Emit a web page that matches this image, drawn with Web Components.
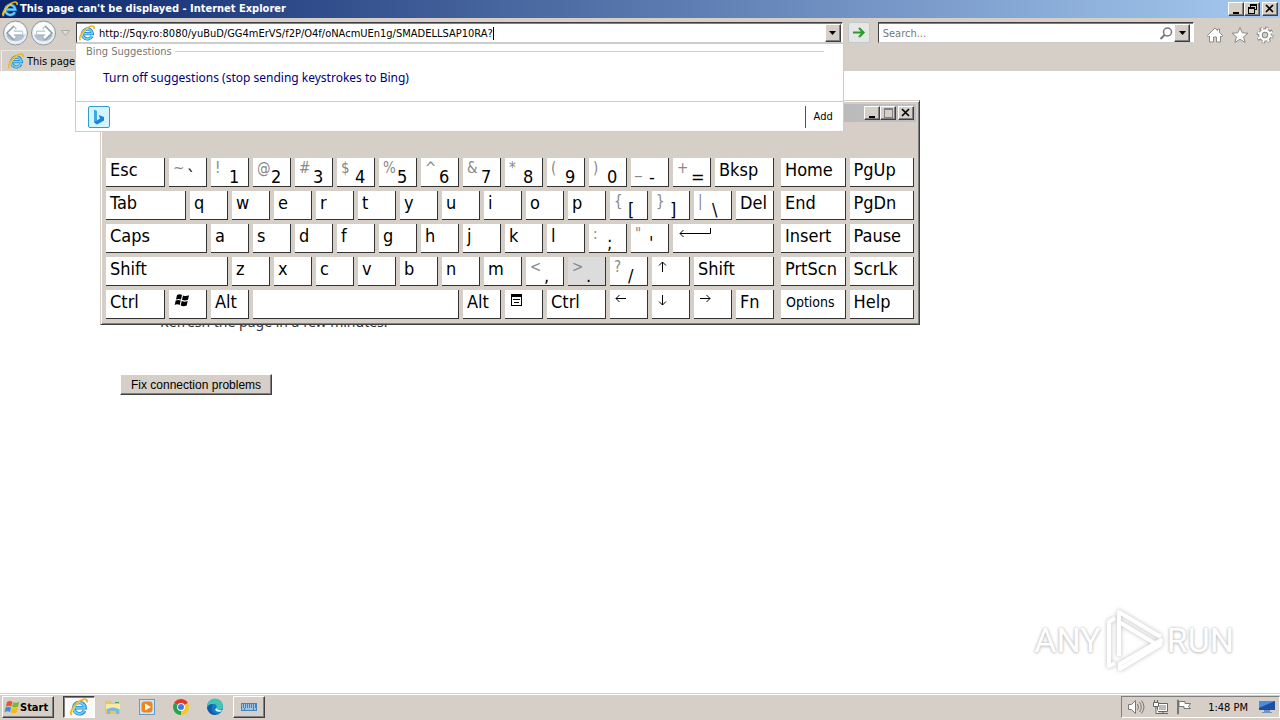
<!DOCTYPE html>
<html lang="en">
<head>
<meta charset="utf-8">
<title>This page can't be displayed - Internet Explorer</title>
<style>
  :root {
    --face: #d5cfc8;
    --ui: "DejaVu Sans Condensed", "DejaVu Sans", sans-serif;
  }
  body { margin: 0; background: #fff; font-family: var(--ui); font-size: 11px; color: #000; }
</style>
</head>
<body>
<desk-top></desk-top>

<script>
const define = (name, html, setup) => {
  const template = document.createElement('template');
  template.innerHTML = html;
  customElements.define(name, class extends HTMLElement {
    constructor() {
      super();
      this.attachShadow({ mode: 'open' }).append(template.content.cloneNode(true));
    }
    connectedCallback() { if (setup) setup(this, this.shadowRoot); }
  });
};

/* Blue "e" with the golden orbit; size comes from --size. */
define('ie-logo', `
<style>
  :host { display: block; width: var(--size, 16px); height: var(--size, 16px); flex: none; }
  svg { display: block; width: 100%; height: 100%; }
</style>
<svg viewBox="0 0 16 16" aria-hidden="true" fill="none">
  <path d="M12.9 11.2A5 5 0 1 1 13.4 8.700H4.600" stroke="#1c86d0" stroke-width="3.200"/>
  <path d="M12.700 11.2A5 5 0 1 1 13.2 8.700H4.600" stroke="#74cdf5" stroke-width="1.800"/>
  <path d="M1.600 15C-1.2 12.600 4.600 5.200 9 2.500C12.500.400 15.600.200 15 3.800" stroke="#eeb41c" stroke-width="1.700"/>
  <path d="M2 14.200C1 11.600 5.500 5.800 9 3.200" stroke="#ffe36b" stroke-width=".8"/>
</svg>`);

/* Minimise / restore / maximise / close button of a window's title bar. */
const captionGlyphs = {
  minimize: '<path d="M3 9h6v2H3z"/>',
  restore: '<path fill-rule="evenodd" d="M4 1h7v6H9v4H2V4h2zM5 3v1h4v2h1V3zM3 6v4h5V6z"/>',
  maximize: '<path fill="#808080" fill-rule="evenodd" d="M2 1h9v10H2zM3 3v7h7V3z"/>',
  close: '<path d="M2 2l7 7M9 2L2 9" fill="none" stroke="#000" stroke-width="1.700"/>'
};
define('caption-button', `
<style>
  :host { display: block; }
  :host([kind="close"]) { margin-left: 2px; }
  button { box-sizing: border-box; display: block; width: 16px; height: 14px; padding: 0 1px; background: var(--face);
    border: 1px solid; border-color: #fff #404040 #404040 #fff; box-shadow: inset -1px -1px #808080; }
  svg { display: block; width: 12px; height: 12px; }
</style>
<button type="button"><svg viewBox="0 0 12 12"></svg></button>`,
(host, root) => {
  const kind = host.getAttribute('kind');
  root.querySelector('button').setAttribute('aria-label', kind);
  root.querySelector('svg').innerHTML = captionGlyphs[kind];
});

define('title-bar', `
<style>
  :host { display: flex; align-items: center; height: 18px; padding: 0 2px; gap: 2px; color: #fff;
    background: linear-gradient(90deg, #0a246a, #a6caf0); }
  h1 { flex: 1; margin: 0; font-size: 11px; line-height: 18px; font-weight: 700; white-space: nowrap; }
  .buttons { display: flex; }
</style>
<ie-logo></ie-logo>
<h1><slot></slot></h1>
<div class="buttons">
  <caption-button kind="minimize"></caption-button>
  <caption-button kind="restore"></caption-button>
  <caption-button kind="close"></caption-button>
</div>`);

define('drop-arrow', `
<style>
  :host { display: block; flex: none; }
  button { box-sizing: border-box; display: grid; place-items: center; width: 16px; height: 18px; padding: 0;
    background: var(--face); border: 1px solid; border-color: #fff #404040 #404040 #fff; box-shadow: inset -1px -1px #808080; }
</style>
<button type="button" aria-label="Open list"><svg width="7" height="4" viewBox="0 0 7 4"><path d="M0 0h7L3.500 4z"/></svg></button>`);

define('suggest-popup', `
<style>
  :host { display: block; background: #fff; border: 1px solid #ccc; box-sizing: border-box; }
  .head { display: flex; align-items: center; gap: 3px; height: 14px; padding: 0 19px 0 10px; color: #777; }
  .head::after { content: ""; flex: 1; border-top: 1px solid #ccc; }
  .row { display: flex; align-items: center; height: 40px; padding: 0 0 3px 27px; border-bottom: 1px solid #ccc; }
  a { color: #000080; font-family: "Noto Sans", sans-serif; font-size: 12px; line-height: 16px; text-decoration: none; }
  .foot { display: flex; align-items: center; justify-content: space-between; height: 29px; padding: 0 10px 0 12px; }
  .foot svg { display: block; }
  button { height: 22px; padding: 0 0 0 8px; border: 0; border-left: 1px solid #555; background: none; font: inherit; }
</style>
<div class="head">Bing Suggestions</div>
<div class="row"><a href="#">Turn off suggestions (stop sending keystrokes to Bing)</a></div>
<div class="foot">
  <svg width="22" height="22" viewBox="0 0 22 22" aria-label="Bing">
    <rect x=".5" y=".5" width="21" height="21" rx="1.500" fill="#d5f3fd" stroke="#2a9fd0"/>
    <path d="M6 4l3 1v9.500l3-2-1.500-3.500L16 11v3.500L9 18.500 6 16.500z" fill="#1b83dc"/>
    <path d="M6 4l3 1v9.500L6 16.500z" fill="#39a9ee"/>
  </svg>
  <button type="button">Add</button>
</div>`);

define('nav-bar', `
<style>
  :host { display: block; background: var(--face); }
  .tools { display: flex; align-items: flex-start; height: 32px; padding: 4px 6px 0 2px; box-sizing: border-box; position: relative; z-index: 20; }
  .travel { display: flex; align-items: center; flex: none; width: 74px; margin-top: -2px; }
  .travel button { padding: 0; border: 0; background: none; }
  .travel svg { display: block; }
  .field { display: flex; align-items: center; box-sizing: border-box; height: 21px; background: #fff; position: relative;
    border: 1px solid; border-color: #404040 #fff #ccc #404040; box-shadow: inset 0 1px #808080; padding: 1px 0 0 2px; }
  .address { flex: 761; padding-right: 1px; }
  .search { flex: 307; padding-right: 3px; padding-left: 4px; margin-left: 8px; }
  input { font: inherit; color: #000; border: 0; padding: 0; margin: 0; outline: 0; background: none; height: 17px; }
  .address input { field-sizing: content; margin-left: 4px; }
  .caret { width: 1px; height: 13px; background: #000; }
  .gap { flex: 1; }
  .search input { flex: 1; min-width: 0; }
  .search input::placeholder { color: #777; opacity: 1; }
  suggest-popup { position: absolute; top: 20px; left: -2px; right: -2px; }
  .go { box-sizing: border-box; flex: none; width: 22px; height: 21px; margin-left: 5px; padding: 2px; border: 1px solid #c0c8d0; border-radius: 2px; background: #e6e6e4; }
  .go svg, .icons svg { display: block; }
  .icons { display: flex; gap: 7px; margin: 4px 0 0 12px; }
  .icons button { padding: 0; border: 0; background: none; }
  .tabs { display: flex; height: 21px; padding-left: 1px; }
  .tab { display: flex; align-items: center; gap: 3px; padding: 0 6px; width: 240px; box-sizing: border-box; white-space: nowrap; overflow: hidden;
    border-left: 1px solid #eee; border-top: 1px solid #e8e6e2; }
</style>
<div class="tools">
  <div class="travel">
    <button type="button" aria-label="Back"><svg width="28" height="26" viewBox="0 0 28 26">
      <circle cx="13.500" cy="13" r="12" fill="#e9eef3" stroke="#8b98a5"/>
      <path d="M3 13a10.500 10.500 0 0 1 21 0z" fill="#fafcfd"/><path d="M4 15a10 9 0 0 0 19 0z" fill="#b3c1cf"/>
      <path d="M20.500 13H7.500m5.500-6-6 6 6 6" fill="none" stroke="#8e9caa" stroke-width="4.500"/>
      <path d="M20 13H8m5-5-5 5 5 5" fill="none" stroke="#fff" stroke-width="2.800"/></svg></button>
    <button type="button" aria-label="Forward"><svg width="28" height="26" viewBox="0 0 28 26">
      <circle cx="13.500" cy="13" r="12" fill="#e9eef3" stroke="#8b98a5"/>
      <path d="M3 13a10.500 10.500 0 0 1 21 0z" fill="#fafcfd"/><path d="M4 15a10 9 0 0 0 19 0z" fill="#b3c1cf"/>
      <path d="M6.500 13h13M14 7l6 6-6 6" fill="none" stroke="#8e9caa" stroke-width="4.500"/>
      <path d="M7 13h12m-5-5 5 5-5 5" fill="none" stroke="#fff" stroke-width="2.800"/></svg></button>
    <svg width="14" height="8" viewBox="0 0 14 8"><path d="M3.500 1.500h8l-4 5z" fill="#e0ddd8" stroke="#aaa"/></svg>
  </div>
  <div class="field address">
    <ie-logo></ie-logo>
    <input type="text" aria-label="Address" value="http://5qy.ro:8080/yuBuD/GG4mErVS/f2P/O4f/oNAcmUEn1g/SMADELLSAP10RA?">
    <span class="caret"></span><span class="gap"></span>
    <drop-arrow></drop-arrow>
    <suggest-popup></suggest-popup>
  </div>
  <button class="go" type="button" aria-label="Go"><svg width="16" height="15" viewBox="0 0 16 15"><path d="M2 7.500h10M8 3l4.500 4.500L8 12" fill="none" stroke="#2e9a2e" stroke-width="2.200"/></svg></button>
  <div class="field search">
    <input type="text" aria-label="Search" placeholder="Search...">
    <svg width="15" height="15" viewBox="0 0 15 15" fill="none" stroke="#777"><circle cx="8.500" cy="6" r="4" stroke-width="1.500"/><path d="M5.500 9L1.500 13" stroke-width="2"/></svg>
    <drop-arrow></drop-arrow>
  </div>
  <div class="icons">
    <button type="button" aria-label="Home"><svg width="18" height="18" viewBox="0 0 18 18"><path d="M1.500 9.500L9 2l2.500 2.500V3h2v3.500l3 3-1 1.500-1-1v6h-4v-5H7.500v5h-4v-6l-1 1z" fill="#fff" stroke="#8a8a8a"/></svg></button>
    <button type="button" aria-label="Favorites"><svg width="18" height="18" viewBox="0 0 18 18"><path d="M9 1.500l2.200 5.300 5.800.4-4.400 3.600 1.500 5.700L9 13.300l-5.100 3.200 1.500-5.700L1 7.200l5.800-.4z" fill="#fff" stroke="#8a8a8a"/></svg></button>
    <button type="button" aria-label="Tools"><svg width="18" height="18" viewBox="0 0 18 18"><g stroke="#8a8a8a" fill="none"><circle cx="9" cy="9" r="6.800" stroke-width="3.500" stroke-dasharray="2.800 2.540"/><circle cx="9" cy="9" r="4.500" stroke-width="4.500"/></g><g stroke="#fff" fill="none"><circle cx="9" cy="9" r="6.500" stroke-width="2.500" stroke-dasharray="1.800 3.305" stroke-dashoffset="-.5"/><circle cx="9" cy="9" r="4.500" stroke-width="2.500"/></g></svg></button>
  </div>
</div>
<div class="tabs"><div class="tab"><ie-logo></ie-logo><span>This page</span></div></div>`);

define('error-page', `
<style>
  :host { display: block; flex: 1; padding: 242px 120px 0; font-family: "Noto Sans", sans-serif; font-size: 14px; line-height: 18px; }
  p { margin: 0 0 43px 40px; color: #333; }
  button { height: 21px; padding: 0 10px; font: 12px "Liberation Sans", sans-serif; color: #000; background: var(--face);
    border: 1px solid; border-color: #fff #404040 #404040 #fff; box-shadow: inset -1px -1px #808080; }
</style>
<p>Refresh the page in a few minutes.</p>
<button type="button">Fix connection problems</button>`);

const keyGlyphs = {
  windows: '<path d="M3 2q3-1.500 5 0L7 6.500q-2.500-1.200-5 0zM9 2.500q3 1.200 6-.3l-1 4.600q-3 1.300-6 0zM1.700 7.500q2.500-1.200 5 0l-1 4.500q-2.500-1.300-5 0zM7.700 8q3 1.300 6 0l-1 4.500q-3 1.300-6 0z"/>',
  menu: '<path fill-rule="evenodd" d="M1 1h11v12H1zM2 4v8h9V4zM3 6h7v1H3zm1 3h5v1H4z"/>',
  up: '<path d="M5.500 12V2M2 5.500L5.500 2 9 5.500" fill="none" stroke="#000"/>',
  down: '<path d="M5.500 2v10M2 8.500l3.500 3.500L9 8.500" fill="none" stroke="#000"/>',
  left: '<path d="M11 5.500H1M4.500 2L1 5.500 4.500 9" fill="none" stroke="#000"/>',
  right: '<path d="M1 5.500h10M7.500 2L11 5.500 7.500 9" fill="none" stroke="#000"/>',
  enter: '<path d="M32.500 1v5.500H2M5.500 3L2 6.500 5.500 10" fill="none" stroke="#000"/>'
};
/* One key: a plain label, a shifted + main pair, or a drawn glyph. */
define('osk-key', `
<style>
  :host { display: block; }
  button { box-sizing: border-box; display: flex; align-items: flex-start; width: 100%; height: 29px; padding: 0 0 0 4px; overflow: hidden;
    background: #fff; border: 0; border-right: 1px solid #333; border-bottom: 1px solid #333;
    font: 18px/24px var(--ui); color: #000; white-space: nowrap; text-align: left; }
  :host([pressed]) button { background: #dcdcdc; }
  :host([small]) button { font-size: 14px; padding-left: 5px; }
  .shifted { width: 14px; flex: none; font-size: 15px; line-height: 21px; color: #888; }
  .main { line-height: 37px; }
  svg { display: block; width: 34px; height: 14px; flex: none; margin: 3px 0 0 1px; }
</style>
<button type="button"></button>`,
(host, root) => {
  const button = root.querySelector('button');
  const { label, shifted, glyph } = host.dataset;
  button.replaceChildren();
  if (glyph) {
    button.setAttribute('aria-label', glyph);
    button.innerHTML = '<svg viewBox="0 0 34 14">' + keyGlyphs[glyph] + '</svg>';
  } else if (shifted) {
    for (const [name, text] of [['shifted', shifted], ['main', label]]) {
      const span = document.createElement('span');
      span.className = name;
      span.textContent = text;
      button.append(span);
    }
  } else button.textContent = label;
});

/* [label, columns, options]; a normal key is two columns of the 32 column grid. */
const S = (shifted, label, more) => [label, 2, { shifted, ...more }];
const G = (glyph, span = 2) => ['', span, { glyph }];
const letters = text => [...text].map(c => [c, 2]);
const rows = [
  [['Esc', 3], S('~', '\`'), S('!', '1'), S('@', '2'), S('#', '3'), S('$', '4'), S('%', '5'), S('^', '6'), S('&', '7'), S('*', '8'), S('(', '9'), S(')', '0'), S('_', '-'), S('+', '='), ['Bksp', 3]],
  [['Tab', 4], ...letters('qwertyuiop'), S('{', '['), S('}', ']'), S('|', '\\'), ['Del', 2]],
  [['Caps', 5], ...letters('asdfghjkl'), S(':', ';'), S('"', "'"), G('enter', 5)],
  [['Shift', 6], ...letters('zxcvbnm'), S('<', ','), S('>', '.', { pressed: true }), S('?', '/'), G('up'), ['Shift', 4]],
  [['Ctrl', 3], G('windows'), ['Alt', 2], [' ', 10], ['Alt', 2], G('menu'), ['Ctrl', 3], G('left'), G('down'), G('right'), ['Fn', 2]]
];
const pad = ['Home', 'PgUp', 'End', 'PgDn', 'Insert', 'Pause', 'PrtScn', 'ScrLk', 'Options', 'Help'];

define('screen-keyboard', `
<style>
  :host { display: block; box-sizing: border-box; width: 820px; padding: 3px 5px 5px; background: var(--face);
    border: 1px solid; border-color: var(--face) #404040 #404040 var(--face); box-shadow: inset 1px 1px #fff, inset -1px -1px #808080; }
  .bar { display: flex; justify-content: flex-end; align-items: center; height: 18px; margin: 0 -2px; padding-right: 2px; background: linear-gradient(90deg, #808080, #c0c0c0); }
  .body { display: flex; gap: 7px; padding-top: 36px; }
  .main, .pad { display: grid; gap: 4px; }
  .main { flex: 668; grid-template-columns: repeat(32, minmax(0, 1fr)); }
  .pad { flex: 133; grid-template-columns: 1fr 1fr; }
</style>
<div class="bar">
  <caption-button kind="minimize"></caption-button>
  <caption-button kind="maximize"></caption-button>
  <caption-button kind="close"></caption-button>
</div>
<div class="body"><div class="main"></div><div class="pad"></div></div>`,
(host, root) => {
  const add = (box, label, span, options = {}) => {
    const key = document.createElement('osk-key');
    key.dataset.label = label;
    if (options.shifted) key.dataset.shifted = options.shifted;
    if (options.glyph) key.dataset.glyph = options.glyph;
    if (options.pressed) key.setAttribute('pressed', '');
    if (label === 'Options') key.setAttribute('small', '');
    if (span) key.style.gridColumn = 'span ' + span;
    box.append(key);
  };
  rows.flat().forEach(key => add(root.querySelector('.main'), ...key));
  pad.forEach(label => add(root.querySelector('.pad'), label));
});

define('play-watermark', `
<style>
  :host { display: flex; align-items: center; gap: 3px; color: #fff; font: 34px/60px Roboto, sans-serif;
    text-shadow: 0 0 3px #bbb, 0 1px 3px #ccc; }
  svg { display: block; filter: drop-shadow(0 0 2px #bbb); }
</style>
<span>ANY</span>
<svg width="60" height="64" viewBox="0 0 60 64" fill="none" stroke="#fff" stroke-width="4" stroke-linejoin="round">
  <path d="M15 48V4L57 29M15 14L52 36"/><path d="M11 10L5 14v44l6-3"/><path d="M57 32L16 56v5L56 37z"/>
</svg>
<span>RUN</span>`);

define('task-button', `
<style>
  :host { display: block; width: 32px; }
  button { box-sizing: border-box; display: grid; place-items: center; width: 100%; height: 22px; padding: 0; border: 1px solid transparent; background: none; }
  :host([raised]) button { background: var(--face); border-color: #fff #404040 #404040 #fff; box-shadow: inset -1px -1px #808080; }
  :host([active]) button { background: #fbfaf8; border-color: #404040 #fff #fff #404040; box-shadow: inset 1px 1px #808080; }
</style>
<button type="button"><slot></slot></button>`,
(host, root) => root.querySelector('button').setAttribute('aria-label', host.title));

define('task-bar', `
<style>
  :host { display: flex; align-items: center; height: 26px; padding-left: 2px; background: var(--face);
    border-top: 1px solid var(--face); box-shadow: inset 0 1px #fff; }
  .start { box-sizing: border-box; display: flex; align-items: center; width: 52px; height: 22px; padding: 0 1px; font: 700 11px var(--ui); color: #000;
    background: var(--face); border: 1px solid; border-color: #fff #404040 #404040 #fff; box-shadow: inset -1px -1px #808080; }
  .apps { display: flex; flex: 1; gap: 2px; margin-left: 9px; }
  .tray { box-sizing: border-box; display: flex; align-items: center; gap: 7px; height: 22px; padding: 0 4px 0 5px; border: 1px solid; border-color: #808080 #fff #fff #808080; }
  svg { display: block; flex: none; }
  time { margin: 0 4px 0 8px; white-space: nowrap; }
</style>
<button class="start" type="button">
  <svg width="16" height="16" viewBox="0 0 16 16"><path d="M3 3q3-2 5.500-.3L7.300 7.500q-3-1.500-5.500.2z" fill="#e9552b"/><path d="M9.300 3.200q3 1.500 6-.5L14 7.800q-3 1.500-6 0z" fill="#7db53a"/><path d="M1.600 8.600q3-1.700 5.500-.2L6 13q-3-1.500-5.500.2z" fill="#3d8fd8"/><path d="M7.900 8.800q3 1.500 6-.1L12.700 13.500q-3 1.500-6 0z" fill="#f5b91c"/></svg>
  <span>Start</span>
</button>
<div class="apps">
  <task-button title="Internet Explorer" active><ie-logo style="--size:18px"></ie-logo></task-button>
  <task-button title="Explorer"><svg width="18" height="18" viewBox="0 0 18 18"><path d="M1 3h6l1 2h8v11H1z" fill="#eac65c"/><path d="M2 6h14v5H2z" fill="#fbe9a4"/><path d="M3 16v-5q6-3 12 0v5h-3v-3H6v3z" fill="#7db9da"/><path d="M11 4h4v1h-4z" fill="#3fa24a"/></svg></task-button>
  <task-button title="Media Player"><svg width="18" height="18" viewBox="0 0 18 18"><rect x="1.500" y="1.500" width="15" height="15" fill="#cfe4f5" stroke="#5f9bcb"/><rect x="3.500" y="3.500" width="11" height="11" rx="3" fill="#f08418"/><path d="M7 5.500v7L13 9z" fill="#fff"/></svg></task-button>
  <task-button title="Chrome"><svg width="18" height="18" viewBox="0 0 18 18"><path d="M9 9L2.100 5A8 8 0 0 1 15.900 5z" fill="#e2382c"/><path d="M9 9L15.900 5A8 8 0 0 1 9 17z" fill="#f8c820"/><path d="M9 9v8A8 8 0 0 1 2.100 5z" fill="#2da04a"/><circle cx="9" cy="9" r="3.900" fill="#fff"/><circle cx="9" cy="9" r="3" fill="#3c7de8"/></svg></task-button>
  <task-button title="Edge"><svg width="18" height="18" viewBox="0 0 18 18"><circle cx="9" cy="9" r="8" fill="#1679c9"/><path d="M1 9a8 8 0 0 1 16-1q0 4-4.500 4-3 0-2-2 1-4-3-4-5 0-6.500 3z" fill="#43c5b5"/><path d="M6 8q-2 7 5 8-7 3-10-6 2-4 6-4z" fill="#1459a8"/><path d="M10.500 10q.500 3 5.500 2l-1 1.500q-5 1-6-2z" fill="#dff"/></svg></task-button>
  <task-button title="On-Screen Keyboard" raised><svg width="18" height="10" viewBox="0 0 18 10"><path d="M1 1h16v8H1z" fill="#3e86c2"/><path d="M2 3h14M2 5h14" stroke="#fff" stroke-dasharray="1 1"/><path d="M2 7h2m1 0h8m1 0h2" stroke="#fff"/></svg></task-button>
</div>
<div class="tray">
  <svg width="18" height="16" viewBox="0 0 18 16" fill="#fff" stroke="#777"><path d="M1.500 5.500h3l4-4v13l-4-4h-3z"/><path d="M10.500 5q2 3 0 6m2-8q3.500 5 0 10m2-11.500q5 6.500 0 13" fill="none"/></svg>
  <svg width="17" height="16" viewBox="0 0 17 16" fill="#fff" stroke="#666"><path d="M5.500 4.500h10v8h-10zM7 14.500h9m-5-2v2"/><path d="M7 6h7v5H7z" fill="#bbb" stroke="none"/><path d="M1.500 3.500h5v4h-5zM2.500 1v2m3-2v2M4 8v6.500h3" /></svg>
  <svg width="17" height="16" viewBox="0 0 17 16" fill="#fff" stroke="#777"><path d="M1.500 1v14h1V1z"/><path d="M3 2.500h6v2h5.500l-2 3 2 2H8v-2H3z"/></svg>
  <time>1:48 PM</time>
  <svg width="16" height="14" viewBox="0 0 16 14"><path d="M0 1h16v9H0z" fill="#1d4fa5"/><path d="M0 1h16L0 8z" fill="#4c8cdb"/><path d="M5 10h6v2H5zM3 12h10v1H3z" fill="#7794b8"/></svg>
</div>`);

define('desk-top', `
<style>
  :host { display: flex; flex-direction: column; min-height: 100vh; position: relative; }
  title-bar, nav-bar, task-bar { flex: none; }
  screen-keyboard { position: absolute; left: 100px; top: 100px; z-index: 10; }
  play-watermark { position: absolute; right: 46px; bottom: 48px; }
</style>
<title-bar>This page can't be displayed - Internet Explorer</title-bar>
<nav-bar></nav-bar>
<error-page></error-page>
<task-bar></task-bar>
<screen-keyboard></screen-keyboard>
<play-watermark></play-watermark>`);
</script>
</body>
</html>
